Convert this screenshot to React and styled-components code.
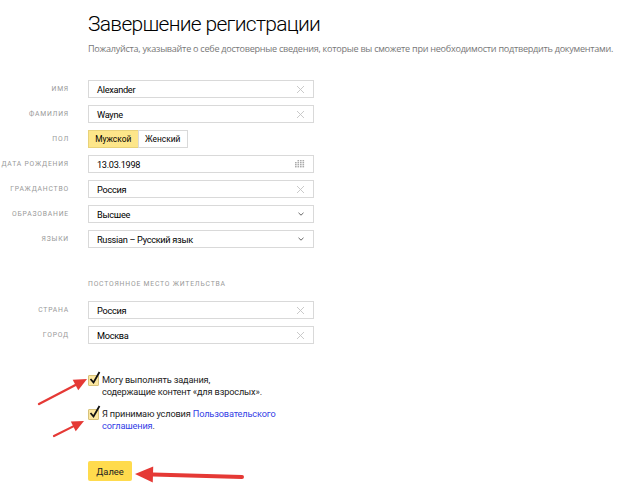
import React from "react";
import styled, { createGlobalStyle } from "styled-components";

const Global = createGlobalStyle`
  html, body { margin: 0; padding: 0; background: #fff; }
  body { font-family: Roboto, "Open Sans", Arial, sans-serif; color: #000; }
`;

const Page = styled.div`
  position: relative;
  width: 623px;
  height: 492px;
  overflow: hidden;
  padding: 10px 0 0 0;
  box-sizing: border-box;
`;

const Head = styled.div`
  padding-left: 88px;
`;

const Title = styled.h1`
  margin: 0;
  font-size: 21px;
  font-weight: 300;
  line-height: 28px;
  color: #000;
  letter-spacing: -0.7px;
`;

const Subtitle = styled.div`
  margin-top: 5px;
  font-family: "Open Sans", Arial, sans-serif;
  font-size: 9.1px;
  color: #777;
  line-height: 12px;
  white-space: nowrap;
  letter-spacing: -0.27px;
`;

const Form = styled.div`
  margin-top: 25px;
  display: grid;
  grid-template-columns: 69px 226px;
  column-gap: 19px;
  row-gap: 7px;
  align-items: center;
`;

const Label = styled.div`
  text-align: right;
  font-size: 6.8px;
  letter-spacing: 0.8px;
  text-transform: uppercase;
  color: #999;
`;

const Field = styled.div`
  position: relative;
  height: 18px;
  border: 1px solid #d9d9d9;
  box-sizing: border-box;
  display: flex;
  align-items: center;
  padding: 0 8px;
  font-size: 9.2px;
  letter-spacing: -0.3px;
  color: #000;
  background: #fff;
`;

const FieldText = styled.span`
  flex: 1;
`;

const Toggle = styled.div`
  display: flex;
  height: 18px;
  width: 100px;
`;

const ToggleButton = styled.div`
  flex: 1;
  display: flex;
  align-items: center;
  justify-content: center;
  font-size: 8.4px;
  box-sizing: border-box;
  border: 1px solid ${({ active }) => (active ? "#e8d27a" : "#d9d9d9")};
  background: ${({ active }) => (active ? "#fde68a" : "#fff")};
  margin-left: ${({ active }) => (active ? "0" : "-1px")};
`;

const Section = styled.div`
  grid-column: 2;
  font-size: 6.8px;
  letter-spacing: 0.8px;
  text-transform: uppercase;
  color: #999;
  padding-top: 25px;
  padding-bottom: 6px;
`;

const Checks = styled.div`
  margin-top: 30px;
  padding-left: 88px;
  display: flex;
  flex-direction: column;
  gap: 10px;
`;

const CheckRow = styled.label`
  display: flex;
  align-items: flex-start;
  gap: 3px;
  font-size: 9.2px;
  letter-spacing: -0.15px;
  line-height: 12px;
  color: #222;
`;

const Box = styled.span`
  position: relative;
  flex: none;
  width: 9px;
  height: 9px;
  margin-top: 1px;
  background: #fce7a0;
  border: 1px solid #d7c27a;
  border-radius: 1px;
`;

const Tick = styled.svg`
  position: absolute;
  left: 0px;
  top: -5px;
`;

const Link = styled.a`
  color: #3340e6;
  text-decoration: none;
`;

const Submit = styled.button`
  margin: 29px 0 0 88px;
  width: 44px;
  height: 20px;
  border: none;
  border-radius: 2px;
  background: #ffdb4d;
  font-family: inherit;
  font-size: 9.4px;
  color: #222;
  padding: 0;
  display: block;
`;

const Overlay = styled.svg`
  position: absolute;
  left: 0;
  top: 0;
  pointer-events: none;
`;

const Cross = () => (
  <svg width="9" height="9" viewBox="0 0 9 9">
    <path d="M1 1L8 8M8 1L1 8" stroke="#c4c4c4" strokeWidth="0.9" />
  </svg>
);

const Chevron = () => (
  <svg width="8" height="6" viewBox="0 0 8 6">
    <path d="M1.5 1.8L4 4.2L6.5 1.8" stroke="#666" strokeWidth="1" fill="none" />
  </svg>
);

const Calendar = () => (
  <svg width="10" height="8" viewBox="0 0 10 8">
    {[0, 1, 2, 3].map((r) =>
      [0, 1, 2, 3].map((c) =>
        r === 0 && c === 0 ? null : (
          <rect key={r + "-" + c} x={c * 2.5} y={r * 2} width="1.6" height="1.4" fill="#aaa" />
        )
      )
    )}
  </svg>
);

const Input = ({ value, icon }) => (
  <Field>
    <FieldText>{value}</FieldText>
    {icon}
  </Field>
);

const Check = ({ children }) => (
  <CheckRow>
    <Box>
      <Tick width="12" height="14" viewBox="0 0 12 14">
        <path d="M1.5 8L4.5 11.5L10.5 1" stroke="#111" strokeWidth="1.8" fill="none" />
      </Tick>
    </Box>
    <span>{children}</span>
  </CheckRow>
);

const Arrow = ({ x1, y1, x2, y2, len = 12, w = 6, stroke = 2.6 }) => {
  const a = Math.atan2(y2 - y1, x2 - x1);
  const bx = x2 - Math.cos(a) * len;
  const by = y2 - Math.sin(a) * len;
  const px = -Math.sin(a) * w;
  const py = Math.cos(a) * w;
  return (
    <g>
      <line x1={x1} y1={y1} x2={bx} y2={by} stroke="#e53935" strokeWidth={stroke} strokeLinecap="round" />
      <polygon points={`${x2},${y2} ${bx + px},${by + py} ${bx - px},${by - py}`} fill="#e53935" />
    </g>
  );
};

export default function App() {
  return (
    <Page>
      <Global />
      <Head>
        <Title>Завершение регистрации</Title>
        <Subtitle>
          Пожалуйста, указывайте о себе достоверные сведения, которые вы сможете при необходимости подтвердить документами.
        </Subtitle>
      </Head>
      <Form>
        <Label>Имя</Label>
        <Input value="Alexander" icon={<Cross />} />
        <Label>Фамилия</Label>
        <Input value="Wayne" icon={<Cross />} />
        <Label>Пол</Label>
        <Toggle>
          <ToggleButton active>Мужской</ToggleButton>
          <ToggleButton>Женский</ToggleButton>
        </Toggle>
        <Label>Дата рождения</Label>
        <Input value="13.03.1998" icon={<Calendar />} />
        <Label>Гражданство</Label>
        <Input value="Россия" icon={<Cross />} />
        <Label>Образование</Label>
        <Input value="Высшее" icon={<Chevron />} />
        <Label>Языки</Label>
        <Input value="Russian – Русский язык" icon={<Chevron />} />
        <Section>Постоянное место жительства</Section>
        <Label>Страна</Label>
        <Input value="Россия" icon={<Cross />} />
        <Label>Город</Label>
        <Input value="Москва" icon={<Cross />} />
      </Form>
      <Checks>
        <Check>
          Могу выполнять задания,
          <br />
          содержащие контент «для взрослых».
        </Check>
        <Check>
          Я принимаю условия <Link href="#">Пользовательского</Link>
          <br />
          <Link href="#">соглашения</Link>.
        </Check>
      </Checks>
      <Submit>Далее</Submit>
      <Overlay width="623" height="492">
        <Arrow x1={39} y1={404} x2={87} y2={379} len={13} w={6} stroke={2.4} />
        <Arrow x1={54} y1={436} x2={84} y2={421} len={12} w={5.5} stroke={2.2} />
        <Arrow x1={242} y1={477} x2={135} y2={474} len={18} w={8} stroke={4} />
      </Overlay>
    </Page>
  );
}
